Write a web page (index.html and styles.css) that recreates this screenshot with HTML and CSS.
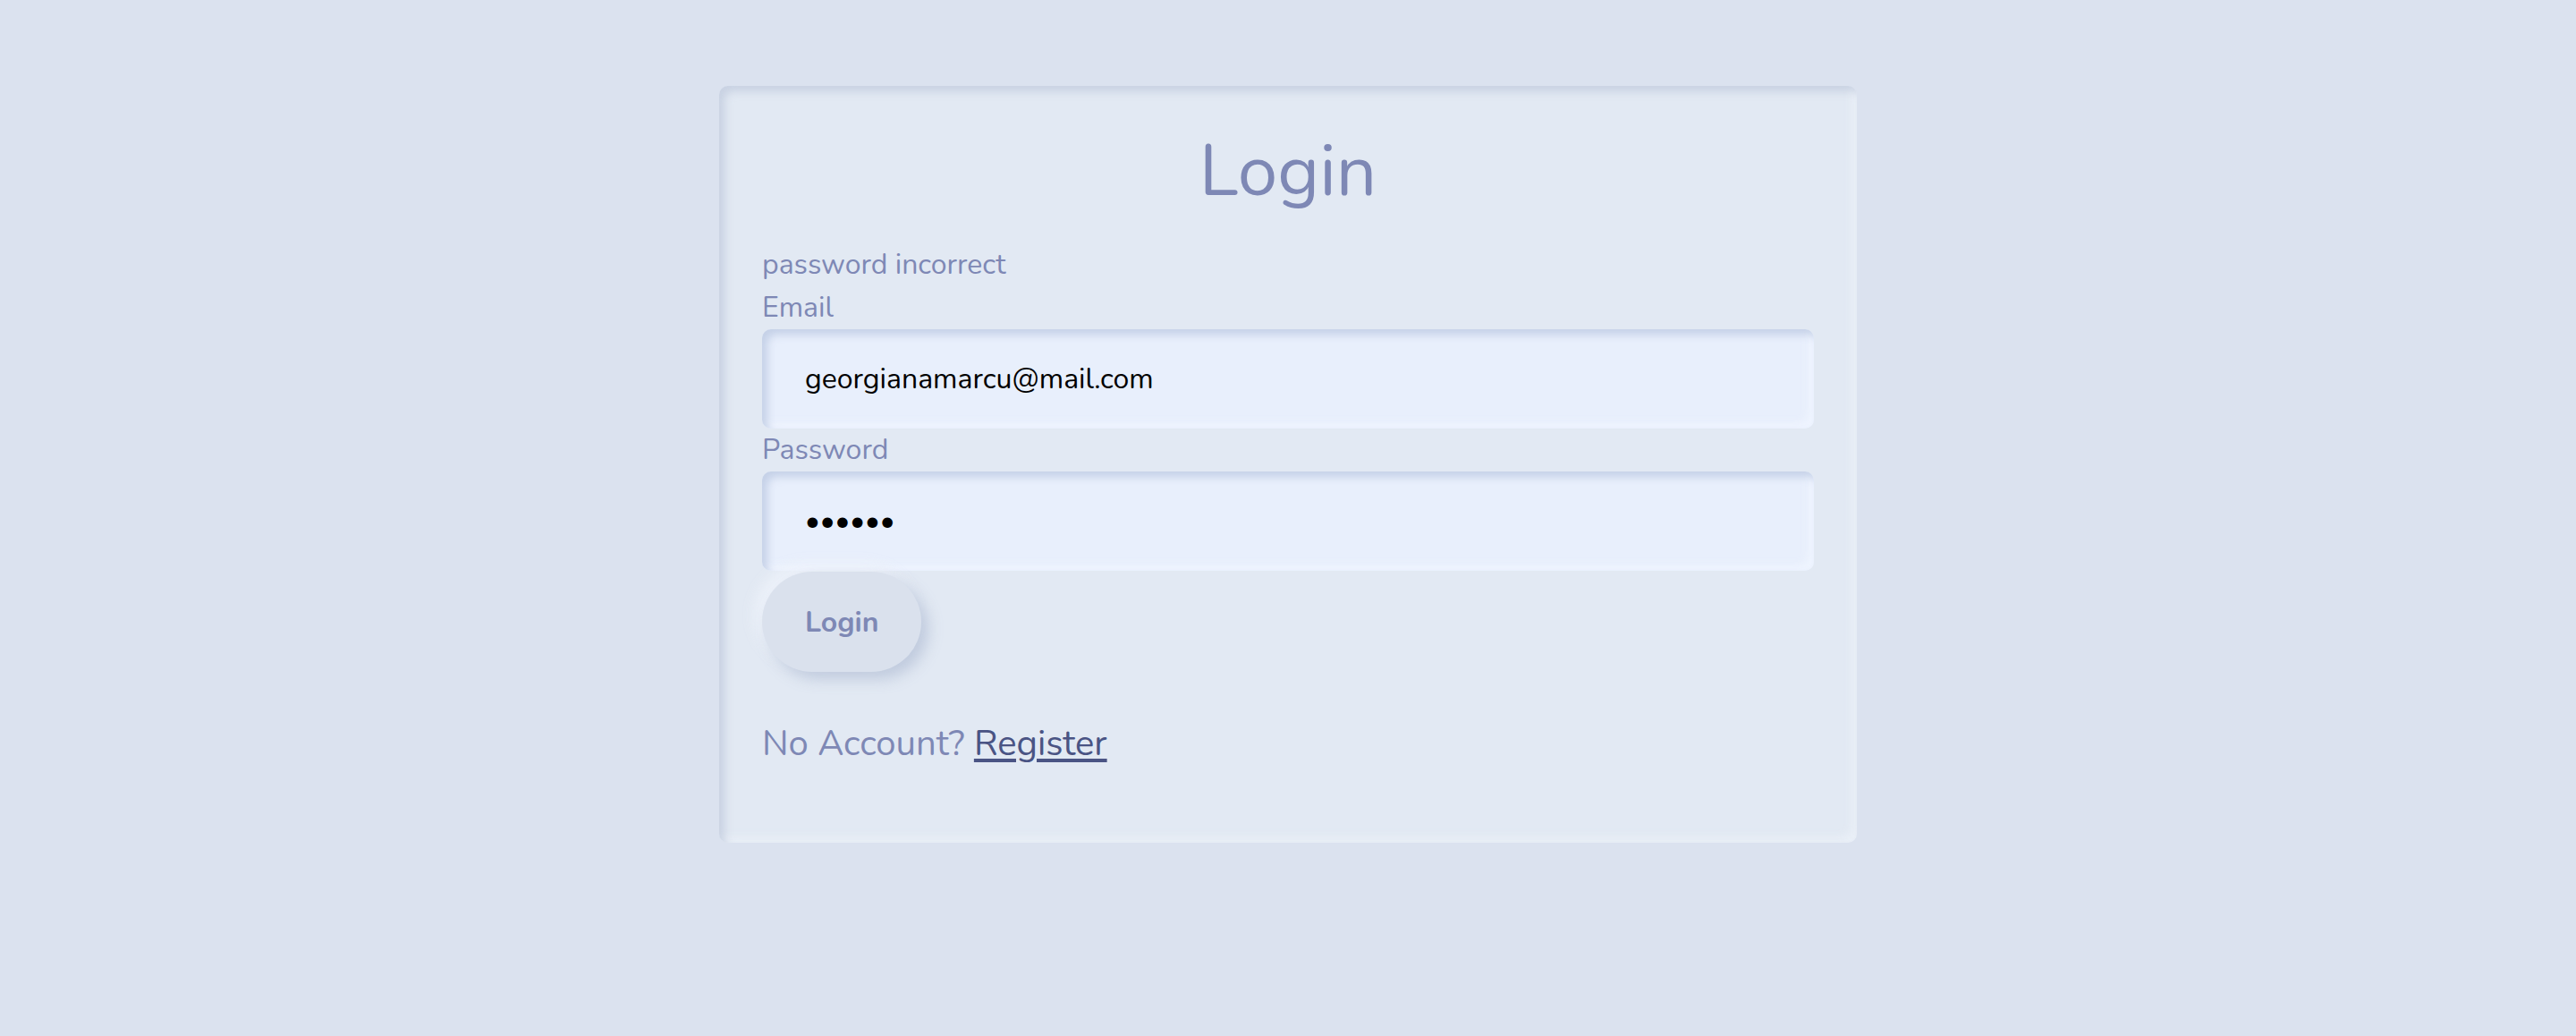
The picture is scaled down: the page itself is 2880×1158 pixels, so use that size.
FILE: index.html
```html
<!DOCTYPE html>
<html lang="en">
<head>
<meta charset="utf-8">
<title>Login</title>
<link rel="stylesheet" href="styles.css">
</head>
<body>
<main class="card">
  <h1 class="title">Login</h1>
  <form class="form">
    <p class="error">password incorrect</p>
    <label class="label" for="email">Email</label>
    <input class="field" id="email" type="email" value="georgianamarcu@mail.com">
    <label class="label" for="password">Password</label>
    <input class="field" id="password" type="password" value="secret">
    <button class="btn" type="button">Login</button>
  </form>
  <p class="footer">No Account? <a class="link" href="#">Register</a></p>
</main>
</body>
</html>
```

FILE: styles.css
```css
html, body {
  margin: 0;
  padding: 0;
}

body {
  background: #dbe2ef;
  font-family: "Nunito", Lato, "Open Sans", sans-serif;
  color: #7e88b5;
  min-height: 1158px;
}

.card {
  width: 1272px;
  box-sizing: border-box;
  margin: 96px auto 0;
  padding: 48px 48px 81px;
  background: #e2e9f3;
  border-radius: 10px;
  box-shadow: inset 6px 6px 10px rgba(180, 192, 214, 0.55),
              inset -6px -6px 10px rgba(236, 241, 249, 0.8);
}

.title {
  margin: 0;
  font-size: 80px;
  line-height: 96px;
  font-weight: 400;
  text-align: center;
  color: #7e88b5;
}

.form {
  display: flex;
  flex-direction: column;
  align-items: flex-start;
  margin-top: 32px;
}

.error,
.label {
  display: block;
  margin: 0;
  font-size: 32px;
  line-height: 48px;
  color: #7e88b5;
}

.field {
  display: block;
  width: 100%;
  height: 111px;
  box-sizing: border-box;
  margin: 0;
  padding: 0 48px;
  border: none;
  outline: none;
  border-radius: 10px;
  background: #e8effc;
  font-family: inherit;
  font-size: 32px;
  color: #000;
  box-shadow: inset 6px 6px 10px rgba(186, 199, 224, 0.75),
              inset -6px -6px 10px rgba(240, 245, 255, 0.9);
}

.btn {
  margin-top: 1px;
  height: 112px;
  padding: 0 48px;
  border: none;
  border-radius: 56px;
  background: #dae1ed;
  font-family: inherit;
  font-size: 32px;
  font-weight: 700;
  color: #7e88b5;
  box-shadow: 8px 8px 16px rgba(184, 195, 216, 0.8),
              -8px -8px 16px rgba(238, 243, 251, 0.9);
  cursor: pointer;
}

.footer {
  margin: 50px 0 0;
  font-size: 40px;
  line-height: 60px;
  color: #7e88b5;
}

.link {
  color: #4a5484;
  text-decoration: underline;
  text-underline-offset: 4px;
}
```
